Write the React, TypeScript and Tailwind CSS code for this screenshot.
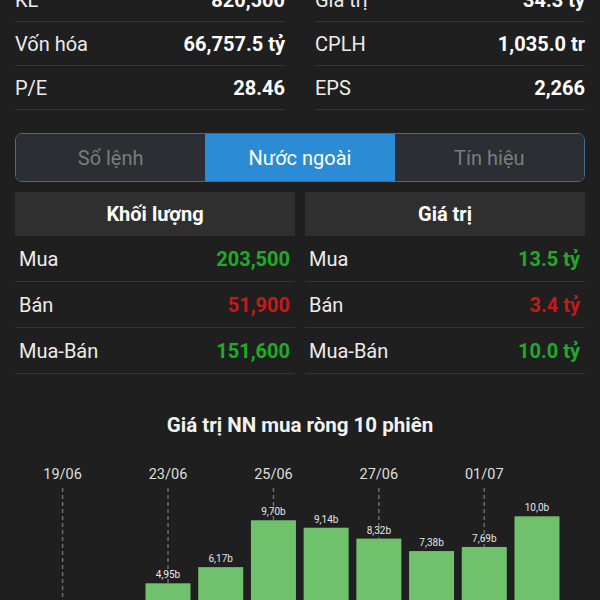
import React from "react";

const stats: [string, string, string, string][] = [
  ["KL", "820,500", "Giá trị", "34.3 tỷ"],
  ["Vốn hóa", "66,757.5 tỷ", "CPLH", "1,035.0 tr"],
  ["P/E", "28.46", "EPS", "2,266"],
];

type Row = { label: string; value: string; color: string };

const volRows: Row[] = [
  { label: "Mua", value: "203,500", color: "text-[#1fab26]" },
  { label: "Bán", value: "51,900", color: "text-[#c41a1a]" },
  { label: "Mua-Bán", value: "151,600", color: "text-[#1fab26]" },
];
const valRows: Row[] = [
  { label: "Mua", value: "13.5 tỷ", color: "text-[#1fab26]" },
  { label: "Bán", value: "3.4 tỷ", color: "text-[#c41a1a]" },
  { label: "Mua-Bán", value: "10.0 tỷ", color: "text-[#1fab26]" },
];

const bars = [
  { v: 1.2, l: "1,20b", d: "19/06" },
  { v: 2.1, l: "2,10b", d: "" },
  { v: 4.95, l: "4,95b", d: "23/06" },
  { v: 6.17, l: "6,17b", d: "" },
  { v: 9.7, l: "9,70b", d: "25/06" },
  { v: 9.14, l: "9,14b", d: "" },
  { v: 8.32, l: "8,32b", d: "27/06" },
  { v: 7.38, l: "7,38b", d: "" },
  { v: 7.69, l: "7,69b", d: "01/07" },
  { v: 10.0, l: "10,0b", d: "" },
];

function Table({ title, rows }: { title: string; rows: Row[] }) {
  return (
    <div className="flex flex-col">
      <div className="flex h-[44px] items-center justify-center bg-[#2f2f2f] text-[20px] font-bold text-white">
        {title}
      </div>
      {rows.map((r) => (
        <div
          key={r.label}
          className="flex h-[46px] items-center justify-between border-b border-[#343434] pl-[4px] pr-[5px] text-[20px]"
        >
          <span className="text-[#ececec]">{r.label}</span>
          <span className={`font-bold ${r.color}`}>{r.value}</span>
        </div>
      ))}
    </div>
  );
}

function Chart() {
  const base = 212;
  const k = 13.27;
  const top0 = 435;
  return (
    <svg width="600" height="230" className="block" style={{ fontFamily: "Roboto, sans-serif" }}>
      {bars.map((b, i) => {
        const cx = 62.6 + i * 52.71;
        const top = base - b.v * k;
        return (
          <g key={i}>
            {b.d && (
              <>
                <line
                  x1={cx}
                  x2={cx}
                  y1={486 - top0}
                  y2={top}
                  stroke="#6a6a6a"
                  strokeWidth="1.5"
                  strokeDasharray="4 3"
                />
                <text x={cx} y={477 - top0} textAnchor="middle" fontSize="14.5" fill="#dedede">
                  {b.d}
                </text>
              </>
            )}
            <rect x={cx - 22.5} y={top} width="45" height={base - top} fill="#6fc26b" />
            <text x={cx} y={top - 5} textAnchor="middle" fontSize="10" fill="#e4e4e4">
              {b.l}
            </text>
          </g>
        );
      })}
    </svg>
  );
}

export default function App() {
  return (
    <div className="h-[600px] w-[600px] overflow-hidden bg-[#1f1f1f] font-['Roboto',sans-serif]">
      <div className="-mt-[22px] grid grid-cols-2 gap-x-[30px] px-[15px]">
        {[0, 1].map((col) => (
          <div key={col} className="flex flex-col">
            {stats.map((s) => (
              <div
                key={s[col * 2]}
                className="flex h-[44px] items-center justify-between border-b border-[#343434] text-[20px]"
              >
                <span className="text-[#ececec]">{s[col * 2]}</span>
                <span className="font-bold text-white">{s[col * 2 + 1]}</span>
              </div>
            ))}
          </div>
        ))}
      </div>

      <div className="mx-[15px] mt-[23px] flex h-[49px] overflow-hidden rounded-[7px] border border-[#3f6d92] text-[20px]">
        <div className="flex flex-1 items-center justify-center bg-[#2b2e32] text-[#7c7c7c]">Sổ lệnh</div>
        <div className="flex flex-1 items-center justify-center bg-[#2b8bd5] text-white">Nước ngoài</div>
        <div className="flex flex-1 items-center justify-center bg-[#2b2e32] text-[#7c7c7c]">Tín hiệu</div>
      </div>

      <div className="mt-[10px] grid grid-cols-2 gap-x-[10px] px-[15px]">
        <Table title="Khối lượng" rows={volRows} />
        <Table title="Giá trị" rows={valRows} />
      </div>

      <div className="mt-[39px] text-center text-[20.5px] font-bold leading-[24px] text-[#f2f2f2]">
        Giá trị NN mua ròng 10 phiên
      </div>
      <Chart />
    </div>
  );
}
